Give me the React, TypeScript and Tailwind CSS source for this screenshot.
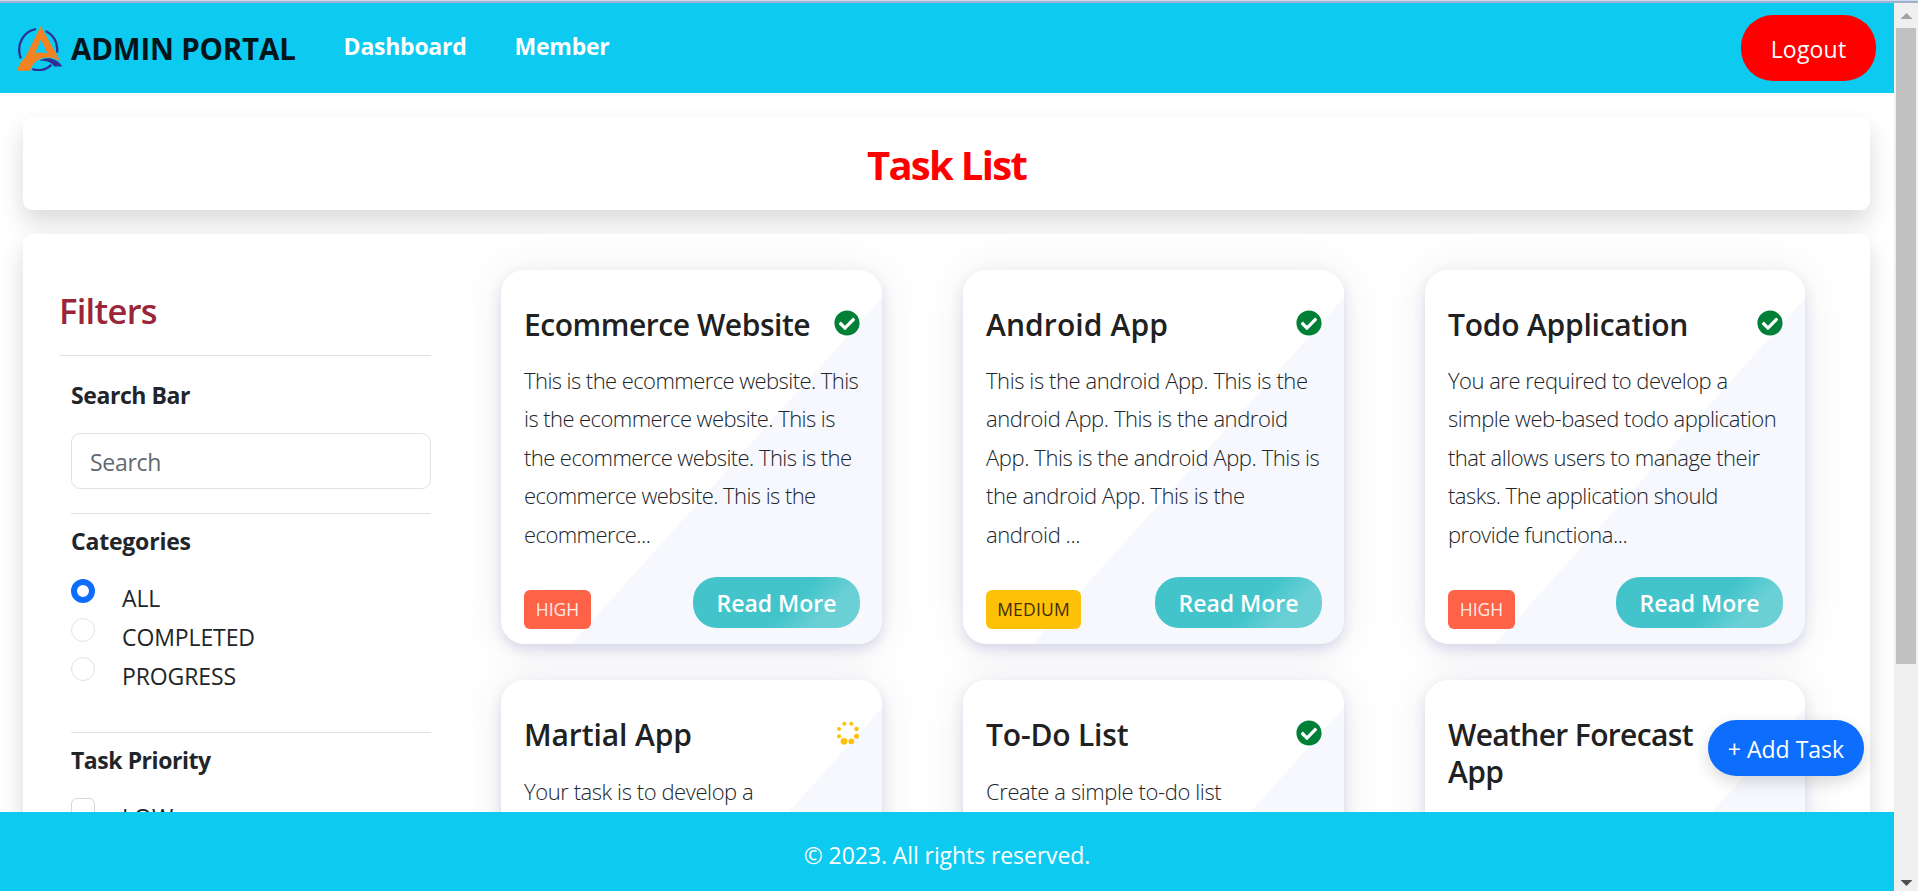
import { FaCheckCircle } from "react-icons/fa";

type Task = {
  title: string[];
  titleClass: string;
  lines: string[];
  textClass: string;
  priority?: "HIGH" | "MEDIUM";
  done: boolean;
};

const tasks: Task[] = [
  {
    title: ["Ecommerce Website"],
    titleClass: "tracking-[-0.45px]",
    lines: [
      "This is the ecommerce website. This",
      "is the ecommerce website. This is",
      "the ecommerce website. This is the",
      "ecommerce website. This is the",
      "ecommerce...",
    ],
    textClass: "mt-[18px] tracking-[-0.57px]",
    priority: "HIGH",
    done: true,
  },
  {
    title: ["Android App"],
    titleClass: "tracking-[0.1px]",
    lines: [
      "This is the android App. This is the",
      "android App. This is the android",
      "App. This is the android App. This is",
      "the android App. This is the",
      "android ...",
    ],
    textClass: "mt-[18px] tracking-[-0.42px]",
    priority: "MEDIUM",
    done: true,
  },
  {
    title: ["Todo Application"],
    titleClass: "tracking-[-0.23px]",
    lines: [
      "You are required to develop a",
      "simple web-based todo application",
      "that allows users to manage their",
      "tasks. The application should",
      "provide functiona...",
    ],
    textClass: "mt-[18px] tracking-[-0.5px]",
    priority: "HIGH",
    done: true,
  },
  {
    title: ["Martial App"],
    titleClass: "tracking-[-0.1px]",
    lines: ["Your task is to develop a"],
    textClass: "mt-[19px] tracking-[-0.43px]",
    done: false,
  },
  {
    title: ["To-Do List"],
    titleClass: "tracking-[-0.17px]",
    lines: ["Create a simple to-do list"],
    textClass: "mt-[19px] tracking-[-0.4px]",
    done: true,
  },
  {
    title: ["Weather Forecast", "App"],
    titleClass: "tracking-[-0.65px]",
    lines: [],
    textClass: "",
    done: true,
  },
];

function Logo() {
  return (
    <svg className="h-[45px] w-[46px] shrink-0" viewBox="0 0 46 45">
      <path d="M19 3.200C7 5 -1.500 18 3.800 32.500" fill="none" stroke="#2e3192" strokeWidth="2.300" />
      <path d="M28.500 5C36 8.500 40.500 16 40.300 26.500" fill="none" stroke="#2e3192" strokeWidth="2.300" />
      <path
        d="M23.700 0.300L43.300 35C39.500 31.500 35.500 29 30.500 27.500L24 13.500L18 27C14 28 11 30 7.500 33Z"
        fill="#f58220"
      />
      <path
        d="M0.300 44.700C2.500 34.500 11 26.800 22.500 26.500C31.500 26.500 38 29.500 43.300 35C38.500 32.300 34 31.300 29 31.500C20.500 32.500 15.500 37 13 44.700Z"
        fill="#f58220"
      />
      <path d="M22.300 34.800C29 30.500 39 31.500 45.300 40.400H37.300C34.500 36.500 29 34.300 22.300 34.800Z" fill="#2e3192" />
      <path d="M15.300 43C21 45.300 29 44.500 34.300 38.800" fill="none" stroke="#2e3192" strokeWidth="2.300" />
    </svg>
  );
}

function Spinner() {
  return (
    <svg className="h-[26px] w-[26px] shrink-0 fill-[#ffc107]" viewBox="0 0 26 26">
      <circle cx="10.300" cy="3.700" r="2" />
      <circle cx="17.300" cy="3.700" r="2" />
      <circle cx="22.500" cy="9" r="2.200" />
      <circle cx="22.500" cy="16.300" r="2.500" />
      <circle cx="17.300" cy="21.300" r="2.900" />
      <circle cx="10" cy="21.300" r="3.400" />
      <circle cx="5" cy="16.300" r="2.100" />
      <circle cx="5" cy="9" r="2" />
    </svg>
  );
}

function Card({ task }: { task: Task }) {
  return (
    <div className="flex h-[374px] flex-col rounded-[24px] bg-[linear-gradient(131.9deg,#fff_56.5%,#f6f8fd_56.8%)] pt-9 pr-[22px] pb-[15px] pl-[23px] shadow-[0_6px_12px_rgba(80,85,160,0.17),0_2px_40px_rgba(60,60,110,0.1)]">
      <div className="flex items-start justify-between">
        <h3 className={`text-[30px] leading-[37px] font-semibold whitespace-nowrap text-[#212121] ${task.titleClass}`}>
          {task.title.map((line) => (
            <span key={line} className="block">
              {line}
            </span>
          ))}
        </h3>
        <div className="pt-1">
          {task.done ? <FaCheckCircle className="size-[26px] text-[#008037]" /> : <Spinner />}
        </div>
      </div>
      <p className={`text-[22px] leading-[38.4px] font-light whitespace-nowrap text-[#212529] ${task.textClass}`}>
        {task.lines.map((line) => (
          <span key={line} className="block">
            {line}
          </span>
        ))}
      </p>
      {task.priority && (
        <div className="mt-auto flex items-end justify-between">
          {task.priority === "HIGH" ? (
            <span className="flex h-[39px] w-[67px] items-center justify-center rounded-md bg-[#ff6347] text-[17.500px] text-[#ffeae6]">
              HIGH
            </span>
          ) : (
            <span className="flex h-[39px] w-[95px] items-center justify-center rounded-md bg-[#ffc107] text-[17.500px] tracking-[0.2px] text-[#3d2f05]">
              MEDIUM
            </span>
          )}
          <button className="mb-px flex h-[51px] w-[167px] items-center justify-center rounded-[24px] bg-[linear-gradient(135deg,#43c4cb_0%,#43c4cb_58%,#6bd0d6_78%,#6bd0d6_100%)] pt-[2px] text-[23px] font-semibold text-white">
            Read More
          </button>
        </div>
      )}
    </div>
  );
}

function Radio({ label, checked }: { label: string; checked?: boolean }) {
  return (
    <label className="flex h-[39px] items-start gap-[27px]">
      {checked ? (
        <span className="size-6 rounded-full border-[6px] border-[#0d6efd] bg-white" />
      ) : (
        <span className="size-6 rounded-full border border-[#dee2e6] bg-white" />
      )}
      <span className="pt-[2px] text-[23px] leading-[34px] tracking-[-0.1px] text-[#212529]">{label}</span>
    </label>
  );
}

function Filters() {
  return (
    <aside className="ml-9 w-[372px] shrink-0 pt-[55px]">
      <h2 className="h-[66px] text-[34.500px] leading-[44px] font-semibold tracking-[-0.7px] text-[#9b2638]">Filters</h2>
      <hr className="border-[#dee2e6]" />
      <div className="pl-3">
        <h4 className="mt-[21px] text-[23px] leading-9 font-bold tracking-[-0.42px] text-[#212529]">Search Bar</h4>
        <input
          className="mt-5 block h-14 w-full rounded-[9px] border border-[#dee2e6] bg-white px-[18px] pt-[2px] text-[23px] tracking-[-0.3px] text-[#212529] placeholder:text-[#62686d]"
          placeholder="Search"
        />
        <hr className="mt-6 border-[#dee2e6]" />
        <h4 className="mt-[9px] text-[23px] leading-9 font-bold tracking-[-0.2px] text-[#212529]">Categories</h4>
        <div className="mt-5 h-[153px]">
          <Radio label="ALL" checked />
          <Radio label="COMPLETED" />
          <Radio label="PROGRESS" />
        </div>
        <hr className="border-[#dee2e6]" />
        <h4 className="mt-[9px] text-[23px] leading-9 font-bold tracking-[-0.45px] text-[#212529]">Task Priority</h4>
        <label className="mt-5 flex items-start gap-[27px]">
          <span className="size-6 rounded-md border border-[#d5d9de] bg-white" />
          <span className="pt-[2px] text-[23px] leading-[34px] text-[#212529]">LOW</span>
        </label>
      </div>
    </aside>
  );
}

function Scrollbar() {
  return (
    <div className="flex w-6 shrink-0 flex-col items-center bg-[#f0f0f0]">
      <svg className="h-[25px] w-6" viewBox="0 0 24 25">
        <path d="M6.500 16L12.500 10L18.500 16Z" fill="#a3a3a3" />
      </svg>
      <div className="h-[636px] w-5 bg-[#c1c1c1]" />
      <svg className="mt-auto h-[25px] w-6" viewBox="0 0 24 25">
        <path d="M6.500 14L12.500 20L18.500 14Z" fill="#505050" />
      </svg>
    </div>
  );
}

export default function App() {
  return (
    <div className="relative flex h-[891px] w-[1918px] flex-col overflow-hidden bg-white font-['Open_Sans',sans-serif]">
      <div className="h-px shrink-0 bg-[#cbdcf2]" />
      <div className="h-[2px] shrink-0 bg-[#9fb1cd]" />
      <div className="flex min-h-0 flex-1">
        <div className="flex min-w-0 flex-1 flex-col">
          <header className="relative z-10 flex h-[90px] shrink-0 items-center bg-[#0dcaf0] pr-[18px] pl-[17px]">
            <Logo />
            <span className="ml-2 pt-[3px] text-[29.500px] font-bold tracking-[-0.2px] text-[#06151a]">ADMIN PORTAL</span>
            <nav className="ml-[48px] flex gap-[48px] pb-[4px] text-[23px] font-bold tracking-[-0.25px] text-white">
              <a>Dashboard</a>
              <a>Member</a>
            </nav>
            <button className="mt-px mb-px ml-auto flex h-[66px] w-[135px] items-center justify-center rounded-[32px] bg-[#ff0000] pt-[2px] text-[23px] tracking-[0.2px] text-white">
              Logout
            </button>
          </header>

          <main className="flex min-h-0 flex-1 flex-col gap-6 overflow-hidden px-6 pt-6 pl-[23px]">
            <div className="flex h-[93px] shrink-0 items-center justify-center rounded-[9px] bg-white pt-[2px] shadow-[0_12px_24px_rgba(0,0,0,0.15)]">
              <h1 className="text-[40px] font-bold tracking-[-1.700px] text-[#ff0000]">Task List</h1>
            </div>
            <div className="relative flex h-[1200px] shrink-0 rounded-[9px] bg-white shadow-[0_12px_24px_rgba(0,0,0,0.15)]">
              <Filters />
              <div className="ml-[70px] grid h-fit grid-cols-[381px_381px_380px] gap-x-[81px] gap-y-9 pt-9">
                {tasks.map((t) => (
                  <Card key={t.title[0]} task={t} />
                ))}
              </div>
            </div>
          </main>

          <footer className="relative z-10 flex h-[79px] shrink-0 items-center justify-center bg-[#0dcaf0] pt-[7px] text-[23px] tracking-[-0.08px] text-white">
            © 2023. All rights reserved.
          </footer>
        </div>
        <Scrollbar />
      </div>
      <button className="absolute top-[720px] left-[1708px] z-20 flex h-14 w-[156px] items-center justify-center rounded-full bg-[#0d6efd] pt-[3px] text-[23px] text-white shadow-[0_6px_16px_rgba(0,0,0,0.15)]">
        + Add Task
      </button>
    </div>
  );
}
